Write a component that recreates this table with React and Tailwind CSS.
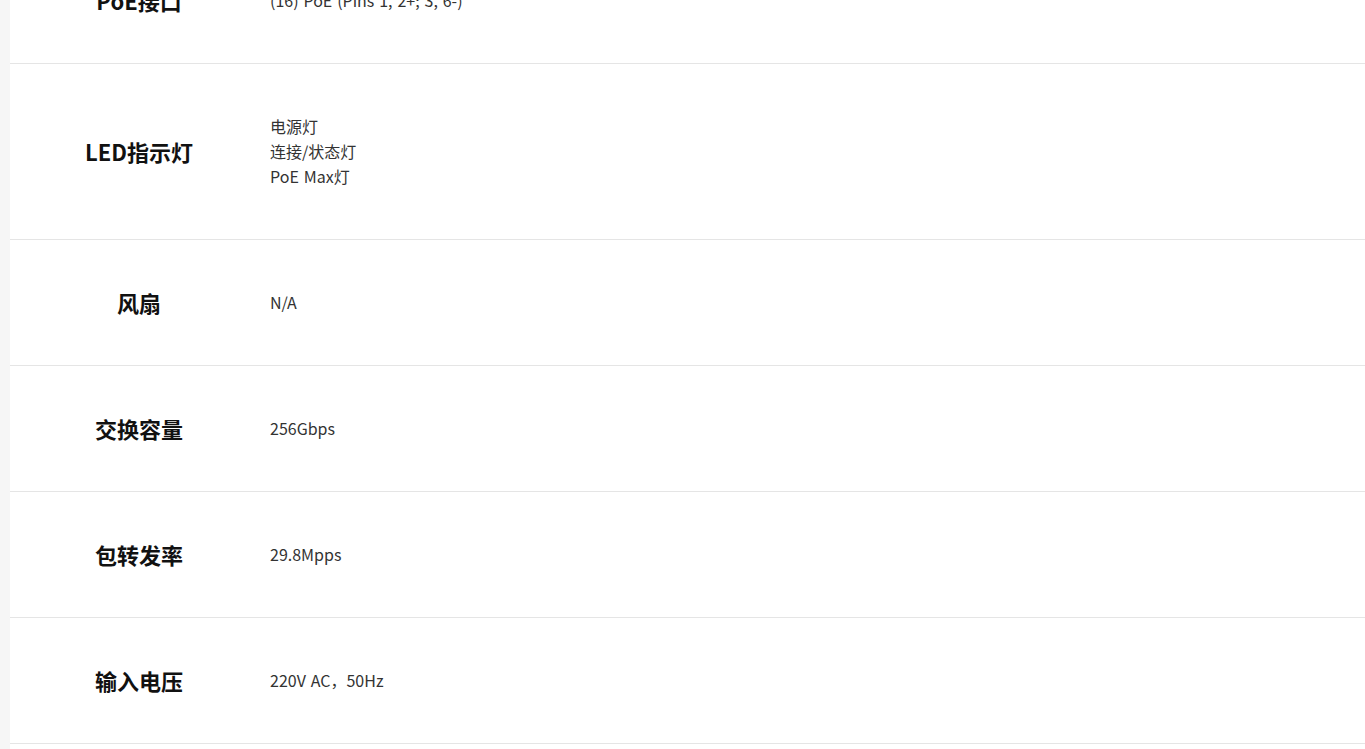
const specs = [
  { label: 'PoE接口', value: ['(16) PoE (Pins 1, 2+; 3, 6-)'] },
  { label: 'LED指示灯', value: ['电源灯', '连接/状态灯', 'PoE Max灯'] },
  { label: '风扇', value: ['N/A'] },
  { label: '交换容量', value: ['256Gbps'] },
  { label: '包转发率', value: ['29.8Mpps'] },
  { label: '输入电压', value: ['220V AC，50Hz'] },
  { label: '功率', value: ['—'] },
]

export default function App() {
  return (
    <div className="flex h-screen overflow-hidden bg-white font-['Noto_Sans_CJK_SC','Noto_Sans',sans-serif]">
      {/* left gutter */}
      <div className="w-[10px] flex-shrink-0 bg-[#f6f6f6]" />

      <div className="flex-1 -mt-[62px]">
        {specs.map((row) => (
          <div
            key={row.label}
            className="grid grid-cols-[260px_1fr] items-center border-b border-[#e5e5e5] py-[50px]"
          >
            <div className="pr-[2px] text-center text-[22px] font-bold leading-[25px] text-[#111]">
              {row.label}
            </div>
            <div className="text-[16px] leading-[25px] text-[#333] [word-spacing:1.3px]">
              {row.value.map((line) => (
                <div key={line}>{line}</div>
              ))}
            </div>
          </div>
        ))}
      </div>
    </div>
  )
}
